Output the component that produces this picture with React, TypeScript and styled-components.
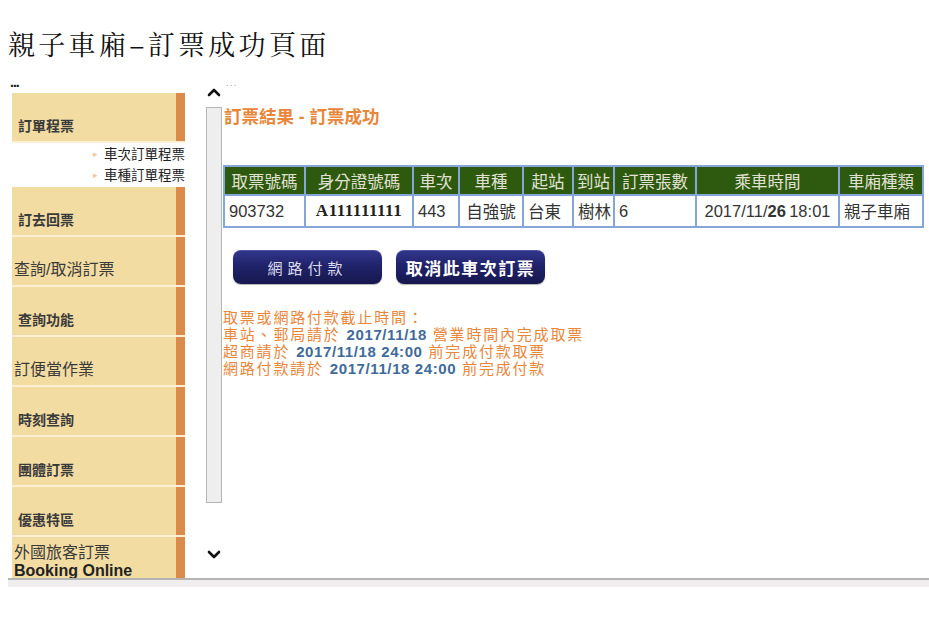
import React from "react"
import styled, { createGlobalStyle } from "styled-components"

const GlobalStyle = createGlobalStyle`
  html, body {
    margin: 0;
    padding: 0;
    background: #ffffff;
  }
  body {
    font-family: "Liberation Sans", "Noto Sans CJK TC", sans-serif;
    color: #222;
  }
`

const CJK = `"Liberation Sans", "Noto Sans CJK TC", sans-serif`

const Page = styled.div`
  width: 929px;
  height: 620px;
  padding-left: 8px;
  box-sizing: border-box;
  overflow: hidden;
`

const Title = styled.h1`
  margin: 0;
  height: 75px;
  padding-top: 26px;
  box-sizing: border-box;
  font-family: "Noto Serif CJK TC", "Noto Sans CJK TC", serif;
  font-size: 27px;
  line-height: 36px;
  font-weight: 400;
  letter-spacing: 3.3px;
  color: #111;
`

const Frame = styled.div`
  display: flex;
  height: 503px;
  overflow: hidden;
`

const HScroll = styled.div`
  height: 7px;
  border-top: 2px solid #b4b4b4;
  background: #efeded;
`

/* ---------- left menu ---------- */

const Sidebar = styled.div`
  width: 177px;
  display: flex;
  flex-direction: column;
`

const Dots = styled.div`
  height: 18px;
  flex-shrink: 0;
  box-sizing: border-box;
  padding: 1px 0 0 2px;
  font-size: 14px;
  font-weight: bold;
  line-height: 12px;
  color: #111;
  letter-spacing: -1px;
`

const MenuItem = styled.div<{ $plain?: boolean; $top?: boolean; $h?: number }>`
  margin-left: 4px;
  height: ${(p) => p.$h ?? 48}px;
  box-sizing: border-box;
  padding: ${(p) => (p.$top ? "7px" : "24px")} 0 0 ${(p) => (p.$plain ? "2px" : "6px")};
  background: linear-gradient(to right, #f3dca2 0, #f3dca2 164px, #db8c4b 164px, #db8c4b 173px);
  border-bottom: 2px solid #fcefd3;
  font-family: ${CJK};
  font-size: ${(p) => (p.$plain ? "16px" : "14px")};
  font-weight: ${(p) => (p.$plain ? 400 : 700)};
  line-height: 18px;
  color: #3a3a3a;
  flex-shrink: 0;
`

const EnLabel = styled.div`
  font-family: "Liberation Sans", sans-serif;
  font-size: 16px;
  font-weight: 700;
  line-height: 17px;
  color: #222;
`

const SubList = styled.div`
  margin-left: 4px;
  width: 173px;
  flex-shrink: 0;
  padding: 1px 0 1px;
  display: flex;
  flex-direction: column;
  align-items: flex-end;
`

const SubItem = styled.div`
  font-family: ${CJK};
  font-size: 13.5px;
  line-height: 20px;
  color: #222;
  &::before {
    content: "▸";
    color: #f0c89a;
    font-size: 9px;
    margin-right: 6px;
    vertical-align: 2px;
  }
`

/* ---------- vertical scroll ---------- */

const ScrollCol = styled.div`
  margin-left: 20px;
  width: 18px;
  display: flex;
  flex-direction: column;
  align-items: center;
`

const Track = styled.div`
  margin-top: 10px;
  width: 16px;
  height: 396px;
  box-sizing: border-box;
  border: 1px solid #b5b5b5;
  background: #eeeeee;
`

const Chevron = ({ down }: { down?: boolean }) => (
  <svg width="14" height="9" viewBox="0 0 14 9" style={{ display: "block" }}>
    <polyline
      points={down ? "2,2 7,7 12,2" : "2,7 7,2 12,7"}
      fill="none"
      stroke="#111"
      strokeWidth="2.6"
      strokeLinecap="round"
      strokeLinejoin="round"
    />
  </svg>
)

const UpSpot = styled.div`
  margin-top: 13px;
`

const DownSpot = styled.div`
  margin-top: 47px;
`

/* ---------- content ---------- */

const Content = styled.div`
  flex: 1;
  display: flex;
  flex-direction: column;
`

const GrayDots = styled.div`
  height: 12px;
  flex-shrink: 0;
  padding: 4px 0 0 3px;
  font-size: 10px;
  line-height: 8px;
  color: #aaa;
  letter-spacing: 1px;
`

const Heading = styled.div`
  margin-top: 16px;
  padding-left: 1px;
  font-family: ${CJK};
  font-size: 17.5px;
  font-weight: 700;
  line-height: 20px;
  color: #e8863a;
`

const Table = styled.table`
  margin-top: 38px;
  width: 699px;
  table-layout: fixed;
  border-collapse: collapse;
  border: 2px solid #86a6da;
  font-family: ${CJK};
  font-size: 16.5px;
  color: #333;
`

const Th = styled.th<{ $w: number }>`
  width: ${(p) => p.$w}px;
  height: 29px;
  padding: 0;
  box-sizing: border-box;
  background: #2e5a10;
  border: 2px solid #86a6da;
  color: #e2e2d4;
  font-weight: 400;
  text-align: center;
  white-space: nowrap;
  overflow: hidden;
`

const Td = styled.td<{ $center?: boolean }>`
  height: 30px;
  padding: 0 4px;
  border: 2px solid #86a6da;
  text-align: ${(p) => (p.$center ? "center" : "left")};
  white-space: nowrap;
  overflow: hidden;
`

const SerifId = styled.span`
  font-family: "Liberation Serif", serif;
  font-weight: 700;
  font-size: 17px;
  color: #222;
  letter-spacing: 0.5px;
`

const Actions = styled.div`
  margin-top: 22px;
  margin-left: 10px;
  display: flex;
  gap: 14px;
`

const NavyButton = styled.button<{ $strong?: boolean }>`
  width: 149px;
  height: 34px;
  padding: 0;
  border: none;
  border-radius: 8px;
  background: linear-gradient(to bottom, #33378e 0%, #20236a 45%, #16184e 100%);
  box-shadow: inset 0 1px 0 rgba(255, 255, 255, 0.15), 0 1px 1px rgba(0, 0, 0, 0.3);
  color: ${(p) => (p.$strong ? "#ffffff" : "#dcdcee")};
  font-family: ${CJK};
  font-size: ${(p) => (p.$strong ? "17px" : "15px")};
  font-weight: ${(p) => (p.$strong ? 700 : 400)};
  letter-spacing: ${(p) => (p.$strong ? "1.5px" : "5px")};
  cursor: pointer;
`

const Notes = styled.div`
  margin-top: 25px;
  font-family: ${CJK};
  font-size: 15px;
  line-height: 17px;
  letter-spacing: 1.8px;
  color: #e8863a;
`

const Date = styled.b`
  font-family: "Liberation Sans", sans-serif;
  font-size: 15px;
  letter-spacing: 0.6px;
  color: #3f6b9a;
`

const columns: [string, number][] = [
  ["取票號碼", 81],
  ["身分證號碼", 108],
  ["車次", 46],
  ["車種", 64],
  ["起站", 50],
  ["到站", 41],
  ["訂票張數", 82],
  ["乘車時間", 143],
  ["車廂種類", 84],
]

const menu = ["訂去回票", "查詢/取消訂票", "查詢功能", "訂便當作業", "時刻查詢", "團體訂票", "優惠特區"]
const plainItems = ["查詢/取消訂票", "訂便當作業"]

export default function App() {
  return (
    <>
      <GlobalStyle />
      <Page>
        <Title>親子車廂–訂票成功頁面</Title>
        <Frame>
          <Sidebar>
            <Dots>...</Dots>
            <MenuItem $h={50}>訂單程票</MenuItem>
            <SubList>
              <SubItem>車次訂單程票</SubItem>
              <SubItem>車種訂單程票</SubItem>
            </SubList>
            {menu.map((m) => (
              <MenuItem key={m} $plain={plainItems.includes(m)} $h={50}>
                {m}
              </MenuItem>
            ))}
            <MenuItem $plain $top $h={60}>
              外國旅客訂票
              <EnLabel>Booking Online</EnLabel>
            </MenuItem>
          </Sidebar>

          <ScrollCol>
            <UpSpot>
              <Chevron />
            </UpSpot>
            <Track />
            <DownSpot>
              <Chevron down />
            </DownSpot>
          </ScrollCol>

          <Content>
            <GrayDots>...</GrayDots>
            <Heading>訂票結果 - 訂票成功</Heading>
            <Table>
              <thead>
                <tr>
                  {columns.map(([c, w]) => (
                    <Th key={c} $w={w}>
                      {c}
                    </Th>
                  ))}
                </tr>
              </thead>
              <tbody>
                <tr>
                  <Td>903732</Td>
                  <Td $center>
                    <SerifId>A111111111</SerifId>
                  </Td>
                  <Td>443</Td>
                  <Td $center>自強號</Td>
                  <Td>台東</Td>
                  <Td>樹林</Td>
                  <Td>6</Td>
                  <Td $center>
                    2017/11/<b>26</b>&thinsp;18:01
                  </Td>
                  <Td>親子車廂</Td>
                </tr>
              </tbody>
            </Table>
            <Actions>
              <NavyButton>網路付款</NavyButton>
              <NavyButton $strong>取消此車次訂票</NavyButton>
            </Actions>
            <Notes>
              取票或網路付款截止時間：
              <br />
              車站、郵局請於 <Date>2017/11/18</Date> 營業時間內完成取票
              <br />
              超商請於 <Date>2017/11/18 24:00</Date> 前完成付款取票
              <br />
              網路付款請於 <Date>2017/11/18 24:00</Date> 前完成付款
            </Notes>
          </Content>
        </Frame>
        <HScroll />
      </Page>
    </>
  )
}
